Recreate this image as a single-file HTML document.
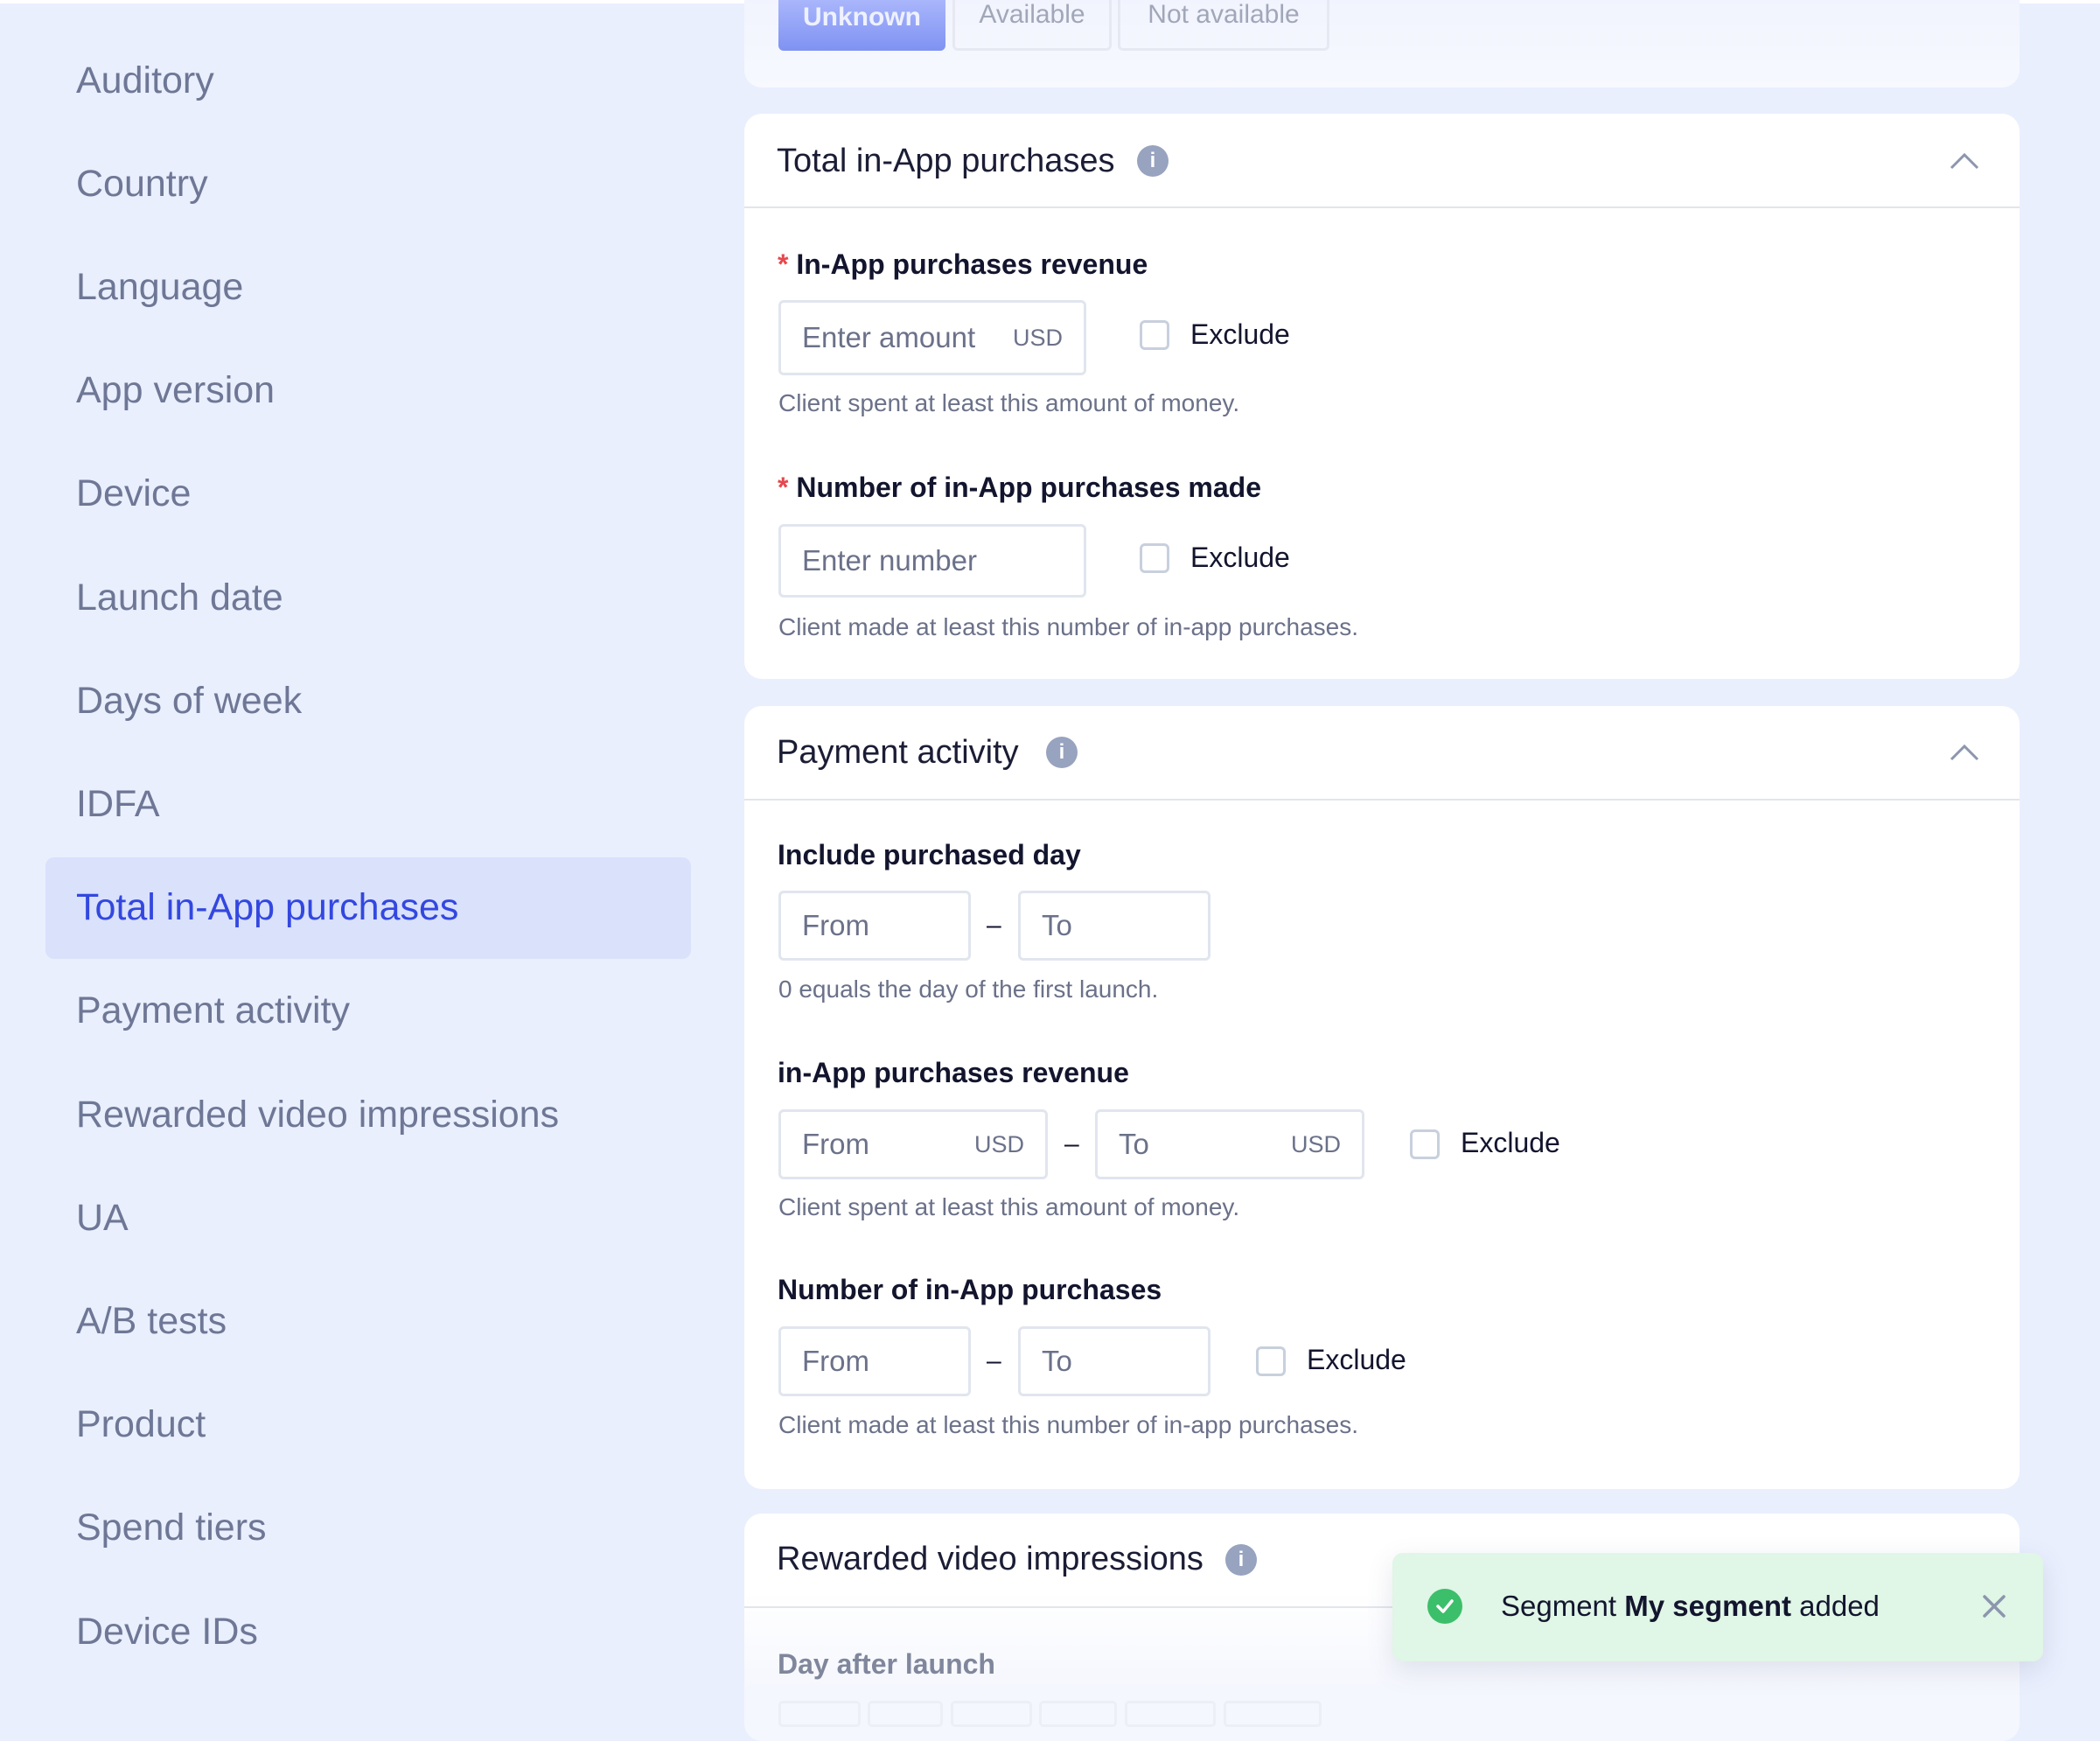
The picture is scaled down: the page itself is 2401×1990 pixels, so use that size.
<!DOCTYPE html>
<html><head><meta charset="utf-8"><style>
*{box-sizing:border-box;margin:0;padding:0}
body{width:2401px;height:1957px;overflow:hidden;background:#e9effd;font-family:"Liberation Sans",sans-serif;position:relative}
.a{position:absolute;white-space:nowrap}
.side{font-size:43px;color:#6e7795;line-height:50px;left:87px}
.card{position:absolute;left:851px;width:1458px;background:#fff;border-radius:20px}
.hd{font-size:38px;color:#1b1d35;line-height:50px}
.line{position:absolute;left:851px;width:1458px;height:2px;background:#e3e5ec}
.lbl{font-size:32px;font-weight:bold;color:#13152e;line-height:40px}
.inp{position:absolute;border:3px solid #e1e5ee;border-radius:6px;background:#fff;font-size:33px;color:#6b7189;line-height:40px}
.inp span{position:absolute;left:24px;top:50%;transform:translateY(-50%)}
.inp i{position:absolute;right:24px;top:50%;transform:translateY(-50%);font-style:normal;font-size:27px}
.help{font-size:28px;color:#6b7189;line-height:34px}
.cb{position:absolute;width:34px;height:34px;border:3px solid #c8d0dd;border-radius:6px;background:#fff}
.ex{font-size:32px;color:#13152e;line-height:40px}
.dash{font-size:30px;color:#13152e;line-height:40px}
.info{position:absolute;width:36px;height:36px;border-radius:50%;background:#97a3bf;color:#fff;font-weight:bold;font-size:24px;text-align:center;line-height:36px}
.star{color:#e5484d}
</style></head><body>
<div class="a" style="left:0;top:0;width:2401px;height:4px;background:#fff"></div>
<!-- sidebar -->
<div class="a side" style="top:67px">Auditory</div>
<div class="a side" style="top:185px">Country</div>
<div class="a side" style="top:303px">Language</div>
<div class="a side" style="top:421px">App version</div>
<div class="a side" style="top:539px">Device</div>
<div class="a side" style="top:658px">Launch date</div>
<div class="a side" style="top:776px">Days of week</div>
<div class="a side" style="top:894px">IDFA</div>
<div class="a" style="left:52px;top:980px;width:738px;height:116px;background:#d9e1fb;border-radius:10px"></div>
<div class="a side" style="top:1012px;color:#3347e0">Total in-App purchases</div>
<div class="a side" style="top:1130px">Payment activity</div>
<div class="a side" style="top:1249px">Rewarded video impressions</div>
<div class="a side" style="top:1367px">UA</div>
<div class="a side" style="top:1485px">A/B tests</div>
<div class="a side" style="top:1603px">Product</div>
<div class="a side" style="top:1721px">Spend tiers</div>
<div class="a side" style="top:1840px">Device IDs</div>

<!-- top card -->
<div class="card" style="top:-20px;height:120px;background:linear-gradient(#f0f3fe,#f7f9ff)"></div>
<div class="a" style="left:890px;top:0;width:191px;height:58px;background:linear-gradient(#a9b6fb,#7f92f2);border-radius:0 0 6px 6px;color:#eef1ff;font-size:30px;font-weight:bold;text-align:center;line-height:40px">Unknown</div>
<div class="a" style="left:1089px;top:0;width:182px;height:58px;border:3px solid #e6e9f1;border-top:none;border-radius:0 0 6px 6px;color:#a1a7b9;font-size:30px;text-align:center;line-height:34px">Available</div>
<div class="a" style="left:1278px;top:0;width:242px;height:58px;border:3px solid #e6e9f1;border-top:none;border-radius:0 0 6px 6px;color:#a1a7b9;font-size:30px;text-align:center;line-height:34px">Not available</div>

<!-- card 2 -->
<div class="card" style="top:130px;height:646px"></div>
<div class="a hd" style="left:888px;top:159px">Total in-App purchases</div>
<div class="info" style="left:1300px;top:166px">i</div>
<svg class="a" style="left:2228px;top:172px" width="36" height="24"><path d="M3 20 L18 5 L33 20" fill="none" stroke="#8c96ad" stroke-width="3"/></svg>
<div class="line" style="top:236px"></div>
<div class="a lbl" style="left:889px;top:282px"><span class="star">*</span> In-App purchases revenue</div>
<div class="inp" style="left:890px;top:343px;width:352px;height:86px"><span>Enter amount</span><i>USD</i></div>
<div class="cb" style="left:1303px;top:366px"></div>
<div class="a ex" style="left:1361px;top:362px">Exclude</div>
<div class="a help" style="left:890px;top:444px">Client spent at least this amount of money.</div>
<div class="a lbl" style="left:889px;top:537px"><span class="star">*</span> Number of in-App purchases made</div>
<div class="inp" style="left:890px;top:599px;width:352px;height:84px"><span>Enter number</span></div>
<div class="cb" style="left:1303px;top:621px"></div>
<div class="a ex" style="left:1361px;top:617px">Exclude</div>
<div class="a help" style="left:890px;top:700px">Client made at least this number of in-app purchases.</div>

<!-- card 3 -->
<div class="card" style="top:807px;height:895px"></div>
<div class="a hd" style="left:888px;top:835px">Payment activity</div>
<div class="info" style="left:1196px;top:842px">i</div>
<svg class="a" style="left:2228px;top:848px" width="36" height="24"><path d="M3 20 L18 5 L33 20" fill="none" stroke="#8c96ad" stroke-width="3"/></svg>
<div class="line" style="top:913px"></div>
<div class="a lbl" style="left:889px;top:957px">Include purchased day</div>
<div class="inp" style="left:890px;top:1018px;width:220px;height:80px"><span>From</span></div>
<div class="a dash" style="left:1128px;top:1038px">–</div>
<div class="inp" style="left:1164px;top:1018px;width:220px;height:80px"><span>To</span></div>
<div class="a help" style="left:890px;top:1114px">0 equals the day of the first launch.</div>
<div class="a lbl" style="left:889px;top:1206px">in-App purchases revenue</div>
<div class="inp" style="left:890px;top:1268px;width:308px;height:80px"><span>From</span><i>USD</i></div>
<div class="a dash" style="left:1217px;top:1288px">–</div>
<div class="inp" style="left:1252px;top:1268px;width:308px;height:80px"><span>To</span><i>USD</i></div>
<div class="cb" style="left:1612px;top:1291px"></div>
<div class="a ex" style="left:1670px;top:1286px">Exclude</div>
<div class="a help" style="left:890px;top:1363px">Client spent at least this amount of money.</div>
<div class="a lbl" style="left:889px;top:1454px">Number of in-App purchases</div>
<div class="inp" style="left:890px;top:1516px;width:220px;height:80px"><span>From</span></div>
<div class="a dash" style="left:1128px;top:1536px">–</div>
<div class="inp" style="left:1164px;top:1516px;width:220px;height:80px"><span>To</span></div>
<div class="cb" style="left:1436px;top:1539px"></div>
<div class="a ex" style="left:1494px;top:1534px">Exclude</div>
<div class="a help" style="left:890px;top:1612px">Client made at least this number of in-app purchases.</div>

<!-- card 4 -->
<div class="card" style="top:1730px;height:260px;background:linear-gradient(#fff 0,#fff 90px,#f5f7fe 200px)"></div>
<div class="a hd" style="left:888px;top:1757px">Rewarded video impressions</div>
<div class="info" style="left:1401px;top:1765px">i</div>
<div class="line" style="top:1836px"></div>
<div class="a lbl" style="left:889px;top:1882px;color:#80879c">Day after launch</div>
<div class="a" style="left:890px;top:1944px;width:94px;height:30px;border:3px solid #eceff5;border-radius:5px"></div>
<div class="a" style="left:992px;top:1944px;width:86px;height:30px;border:3px solid #eceff5;border-radius:5px"></div>
<div class="a" style="left:1087px;top:1944px;width:93px;height:30px;border:3px solid #eceff5;border-radius:5px"></div>
<div class="a" style="left:1188px;top:1944px;width:89px;height:30px;border:3px solid #eceff5;border-radius:5px"></div>
<div class="a" style="left:1286px;top:1944px;width:104px;height:30px;border:3px solid #eceff5;border-radius:5px"></div>
<div class="a" style="left:1399px;top:1944px;width:112px;height:30px;border:3px solid #eceff5;border-radius:5px"></div>

<!-- toast -->
<div class="a" style="left:1592px;top:1775px;width:744px;height:124px;background:#e0f6e6;border-radius:12px;box-shadow:0 10px 30px rgba(80,90,130,.15)"></div>
<svg class="a" style="left:1632px;top:1816px" width="40" height="40"><circle cx="20" cy="20" r="20" fill="#3cbf6a"/><path d="M12 20 L18 26 L28 14" fill="none" stroke="#fff" stroke-width="3.5" stroke-linecap="round" stroke-linejoin="round"/></svg>
<div class="a" style="left:1716px;top:1816px;font-size:33px;line-height:40px;color:#13152e">Segment <b>My segment</b> added</div>
<svg class="a" style="left:2266px;top:1822px" width="28" height="28"><path d="M3 3 L25 25 M25 3 L3 25" stroke="#8c96ad" stroke-width="3.5" stroke-linecap="round"/></svg>
</body></html>
